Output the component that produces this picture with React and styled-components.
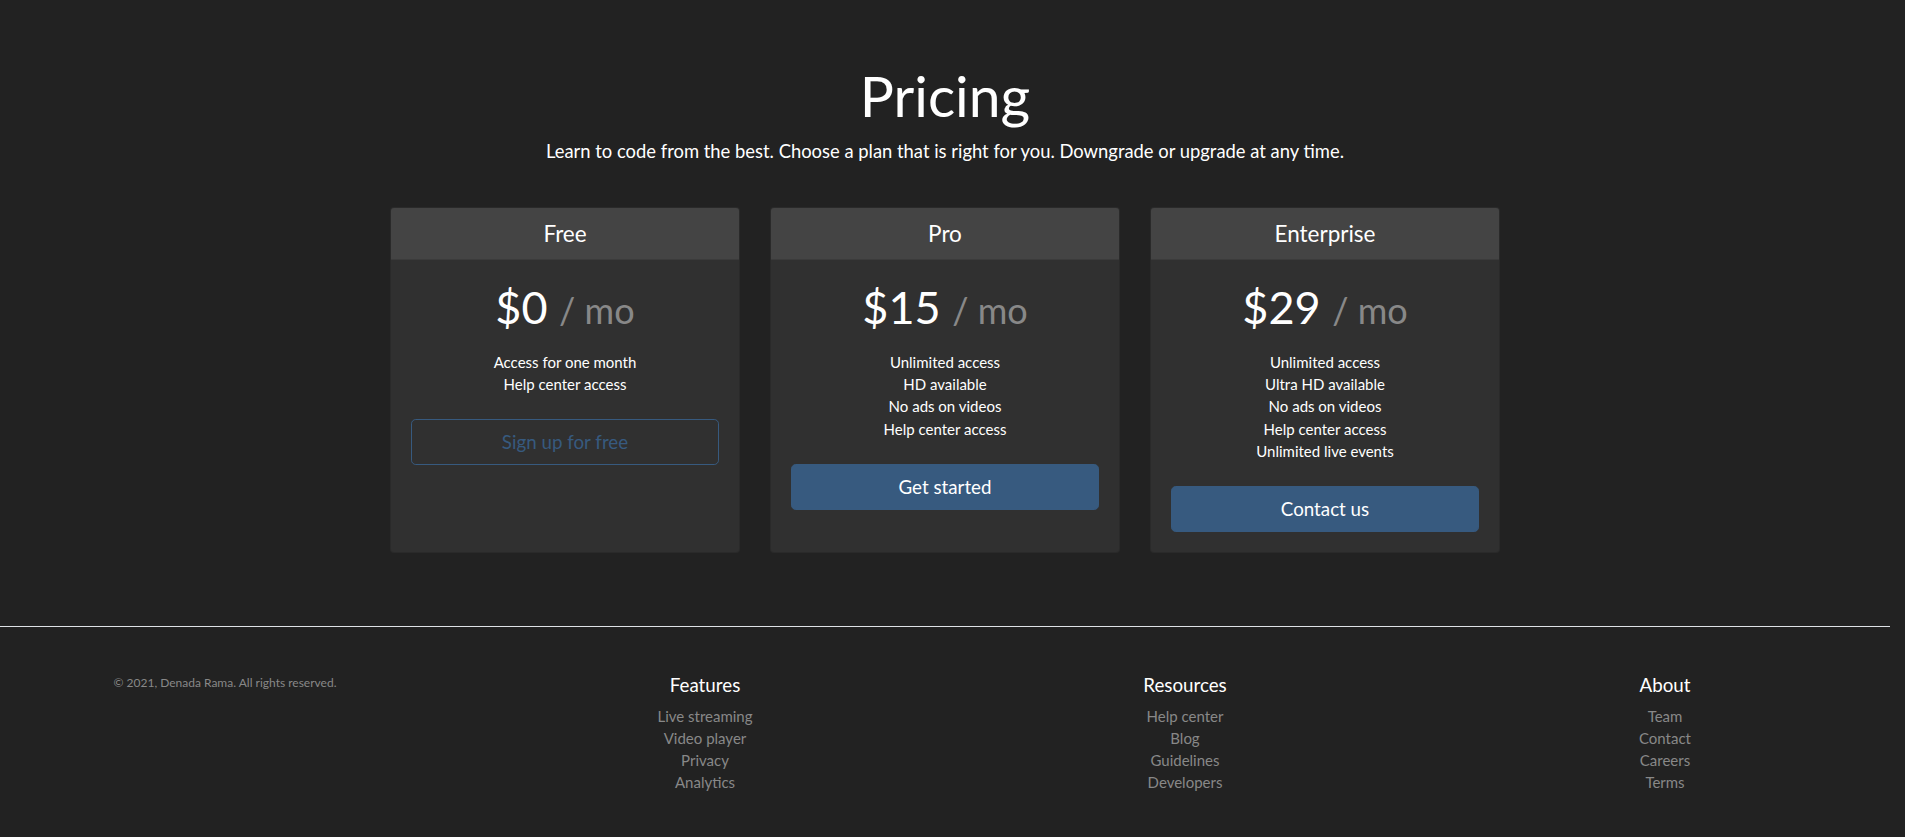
import React from 'react';
import styled, { createGlobalStyle } from 'styled-components';

const GlobalStyle = createGlobalStyle`
  html, body {
    margin: 0;
    padding: 0;
    background: #222222;
    overflow: hidden;
  }
  body {
    font-family: Lato, "Open Sans", "Liberation Sans", sans-serif;
    font-size: 15px;
    line-height: 1.48;
    color: #ffffff;
  }
  * {
    box-sizing: border-box;
  }
`;

const Page = styled.div`
  width: calc(100vw - 15px);
`;

const PricingHeader = styled.header`
  padding: 61px 16px 24px;
  text-align: center;

  h1 {
    font-size: 57px;
    font-weight: 400;
    line-height: 68px;
    margin: 0 0 8px;
  }

  p {
    font-size: 18.4px;
    font-weight: 400;
    line-height: 28px;
    margin: 0 0 16px;
  }
`;

const CardDeck = styled.div`
  width: 1110px;
  margin: 2px auto 0;
  display: grid;
  grid-template-columns: repeat(3, 1fr);
  gap: 30px;
  text-align: center;
`;

const Card = styled.div`
  display: flex;
  flex-direction: column;
  background: #303030;
  border: 1px solid rgba(0, 0, 0, 0.125);
  border-radius: 4px;
  overflow: hidden;
`;

const CardHeader = styled.div`
  background: #444444;
  padding: 12px 20px;
  border-bottom: 1px solid rgba(0, 0, 0, 0.125);

  h4 {
    margin: 0;
    font-size: 22.5px;
    font-weight: 400;
    line-height: 1.2;
  }
`;

const CardBody = styled.div`
  flex: 1;
  padding: 20px;
`;

const Price = styled.h1`
  font-size: 45px;
  font-weight: 400;
  line-height: 1.2;
  margin: 0 0 12px;

  small {
    font-size: 80%;
    color: #888888;
  }
`;

const Features = styled.ul`
  list-style: none;
  padding: 0;
  margin: 17px 0 24px;
  line-height: 22.2px;
`;

const Button = styled.button`
  display: block;
  width: 100%;
  font-family: inherit;
  font-size: 18.75px;
  line-height: 28px;
  padding: 8px 16px;
  border-radius: 4.8px;
  border: 1px solid #375a7f;
  background: ${(p) => (p.$outline ? 'transparent' : '#375a7f')};
  color: ${(p) => (p.$outline ? '#375a7f' : '#ffffff')};
  cursor: pointer;
`;

const Footer = styled.footer`
  margin-top: 73px;
  padding-top: 47px;
  border-top: 1px solid #dee2e6;
`;

const FooterRow = styled.div`
  margin: 0 -15px;
  display: grid;
  grid-template-columns: repeat(4, 1fr);
  text-align: center;
`;

const FooterCol = styled.div`
  padding: 0 15px;

  h5 {
    font-size: 18.75px;
    font-weight: 400;
    line-height: 1.2;
    margin: 0 0 8px;
  }

  ul {
    list-style: none;
    padding: 0;
    margin: 0;
    line-height: 22.2px;
  }

  a {
    color: #888888;
    text-decoration: none;
  }
`;

const Copyright = styled.small`
  display: block;
  font-size: 12px;
  color: #888888;
`;

const plans = [
  {
    name: 'Free',
    price: 0,
    features: ['Access for one month', 'Help center access'],
    cta: 'Sign up for free',
    outline: true,
  },
  {
    name: 'Pro',
    price: 15,
    features: ['Unlimited access', 'HD available', 'No ads on videos', 'Help center access'],
    cta: 'Get started',
  },
  {
    name: 'Enterprise',
    price: 29,
    features: [
      'Unlimited access',
      'Ultra HD available',
      'No ads on videos',
      'Help center access',
      'Unlimited live events',
    ],
    cta: 'Contact us',
  },
];

const footerLinks = [
  { title: 'Features', links: ['Live streaming', 'Video player', 'Privacy', 'Analytics'] },
  { title: 'Resources', links: ['Help center', 'Blog', 'Guidelines', 'Developers'] },
  { title: 'About', links: ['Team', 'Contact', 'Careers', 'Terms'] },
];

const App = () => {
  return (
    <Page>
      <GlobalStyle />
      <PricingHeader>
        <h1>Pricing</h1>
        <p>Learn to code from the best. Choose a plan that is right for you. Downgrade or upgrade at any time.</p>
      </PricingHeader>

      <CardDeck>
        {plans.map((plan) => (
          <Card key={plan.name}>
            <CardHeader>
              <h4>{plan.name}</h4>
            </CardHeader>
            <CardBody>
              <Price>
                ${plan.price} <small>/ mo</small>
              </Price>
              <Features>
                {plan.features.map((f) => (
                  <li key={f}>{f}</li>
                ))}
              </Features>
              <Button type="button" $outline={plan.outline}>
                {plan.cta}
              </Button>
            </CardBody>
          </Card>
        ))}
      </CardDeck>

      <Footer>
        <FooterRow>
          <FooterCol>
            <Copyright>© 2021, Denada Rama. All rights reserved.</Copyright>
          </FooterCol>
          {footerLinks.map((col) => (
            <FooterCol key={col.title}>
              <h5>{col.title}</h5>
              <ul>
                {col.links.map((l) => (
                  <li key={l}>
                    <a href="#">{l}</a>
                  </li>
                ))}
              </ul>
            </FooterCol>
          ))}
        </FooterRow>
      </Footer>
    </Page>
  );
};

export default App;
